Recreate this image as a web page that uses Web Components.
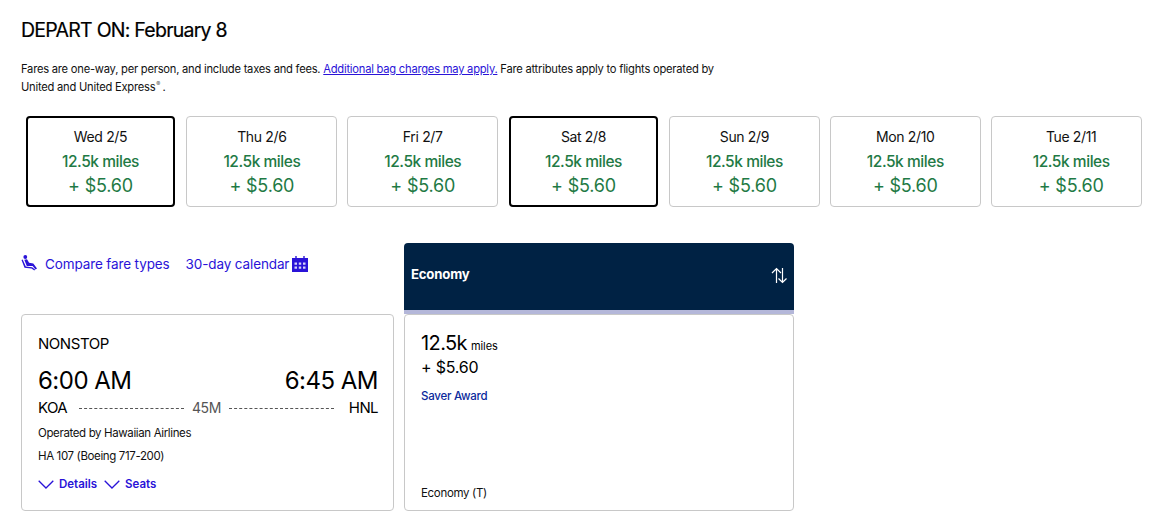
<!DOCTYPE html>
<html lang="en"><head><meta charset="utf-8"><title>Depart on</title>
<style>
html,body{margin:0;padding:0;background:#fff}
body{font-family:Inter,"Liberation Sans",sans-serif;color:#000}
</style></head><body>
<results-page></results-page>
<template id="tp-page"><style>
:host{display:block;width:1174px;height:511px;box-sizing:border-box;padding:18px 0 0 21px;overflow:hidden;letter-spacing:-.3px}
h1{margin:0;font-size:19.5px;line-height:24px;font-weight:400;letter-spacing:-.75px;color:#000;-webkit-text-stroke:.2px #000}
p{margin:18px 0 0;width:720px;font-size:11.2px;line-height:18px;letter-spacing:-.24px;color:#111}
a{color:#2a13d8;text-decoration:underline}
sup{font-size:6px;line-height:0;color:#555;margin:0 2px 0 1px;letter-spacing:0}
.days{display:grid;grid-template-columns:repeat(7,1fr);gap:10px;width:1116px;margin:20px 0 0 4.6px}
.main{display:grid;grid-template-columns:373px 390px;column-gap:10px;margin-top:36px}
.left{display:flex;flex-direction:column;justify-content:space-between}
.links{display:flex;align-items:center;gap:16px;height:42px}
.lnk{display:flex;align-items:center;color:#2a13d8;font-size:13.5px;letter-spacing:-.12px}
.lnk svg{display:block}
</style>
<h1>DEPART ON: February 8</h1>
<p>Fares are one-way, per person, and include taxes and fees. <a href="#">Additional bag charges may apply.</a> Fare attributes apply to flights operated by<br>United and United Express<sup>®</sup>.</p>
<div class="days">
<day-card selected label="Wed 2/5"></day-card><day-card label="Thu 2/6"></day-card><day-card label="Fri 2/7"></day-card><day-card selected style="margin-left:.8px" label="Sat 2/8"></day-card><day-card label="Sun 2/9"></day-card><day-card label="Mon 2/10"></day-card><day-card offset label="Tue 2/11"></day-card>
</div>
<div class="main">
<div class="left">
<div class="links">
<span class="lnk"><svg width="18" height="16" viewBox="0 0 18 16" style="margin-right:6px;margin-top:-2px"><g fill="#2a13d8"><circle cx="4.300" cy="2" r="1.900"/><path d="M3.300 4.800 6 4.300 8.100 7.700l4.200.7 3.700 5-1.500 1-2.900-3.300-5.800-.1z"/><path d="M.5 4.900 1.700 4.500 4.800 11.600l6.300.6 3 2.300-.8 1-2.800-2-7-.7z"/></g></svg>Compare fare types</span>
<span class="lnk">30-day calendar<svg width="16" height="16" viewBox="0 0 16 16" style="margin-left:3px;margin-top:-1px"><path fill="#2a13d8" d="M0 2h3.300V0h1.400v2h6.600V0h1.400v2H16v14H0z"/><path fill="#d5d2f8" d="M2.500 6.500H5v2.200H2.500zM6.800 6.500h2.400v2.200H6.800zM11 6.500h2.500v2.200H11zM2.500 10.500H5v2.200H2.500zM6.800 10.500h2.400v2.200H6.800zM11 10.500h2.500v2.200H11z"/></svg></span>
</div>
<flight-card></flight-card>
</div>
<fare-column></fare-column>
</div>
</template>
<template id="tp-day"><style>
:host{display:block;box-sizing:border-box;height:91px;border:1px solid #c8c8c8;border-radius:4px;text-align:center;background:#fff;padding-top:11px}
:host([selected]){border:2px solid #000;padding-top:10px;margin-right:1px}
:host([offset]){padding-left:10px}
.d{font-size:14px;line-height:17px;letter-spacing:-.35px;color:#111}
.m{font-size:15.500px;line-height:21px;margin-top:6px;color:#1f7a45;letter-spacing:-.45px;font-weight:500}
.c{font-size:18px;line-height:24px;margin-top:2px;color:#1f7a45;letter-spacing:-.2px}
</style><div class="d"></div><div class="m">12.5k miles</div><div class="c">+ $5.60</div></template>
<template id="tp-flight"><style>
:host{display:block;box-sizing:border-box;height:197px;border:1px solid #c8c8c8;border-radius:4px;padding:19px 15px 0 16px;background:#fff}
.n{font-size:15px;line-height:20px;letter-spacing:-.45px}
.t{display:flex;justify-content:space-between;font-size:24px;line-height:30px;margin-top:12px;letter-spacing:-.52px}
.r{display:flex;align-items:center;font-size:15px;line-height:20px;letter-spacing:-.6px;margin-top:2px}
.r i{flex:1;border-top:1px dashed #555;height:0}
.r i:nth-of-type(1){margin:0 8px 0 12px}
.r i:nth-of-type(2){margin:0 15px 0 8px}
.r b{font-weight:400;color:#555;font-size:14px;letter-spacing:-.4px}
.o{font-size:11.500px;line-height:16px;letter-spacing:-.37px;color:#111}
.o.a{margin-top:7px}.o.b{margin-top:7px}
.l{display:flex;align-items:center;margin-top:12px;font-size:11.500px;line-height:16px;font-weight:600;color:#2a13d8;letter-spacing:-.02px}
.l svg{margin-right:5px}.l span{margin-right:7px}
</style>
<div class="n">NONSTOP</div>
<div class="t"><span>6:00 AM</span><span>6:45 AM</span></div>
<div class="r"><span>KOA</span><i></i><b>45M</b><i></i><span>HNL</span></div>
<div class="o a">Operated by Hawaiian Airlines</div>
<div class="o b">HA 107 (Boeing 717-200)</div>
<div class="l"><svg width="16" height="9" viewBox="0 0 16 9"><path d="M.7.7 8 8 15.300.7" fill="none" stroke="#2a13d8" stroke-width="1.300"/></svg><span>Details</span><svg width="16" height="9" viewBox="0 0 16 9"><path d="M.7.7 8 8 15.300.7" fill="none" stroke="#2a13d8" stroke-width="1.300"/></svg><span>Seats</span></div>
</template>
<template id="tp-fare"><style>
:host{display:flex;flex-direction:column}
.h{display:flex;box-sizing:border-box;height:71px;align-items:center;justify-content:space-between;background:#002244;border-bottom:4px solid #b4b7d9;border-radius:4px 4px 0 0;padding:0 6px 6px 7px;color:#fff;font-size:13.200px;font-weight:700;letter-spacing:-.2px}
.h svg{margin-top:3px}
.b{box-sizing:border-box;height:197px;border:1px solid #c8c8c8;border-radius:4px;padding:16px 16px 0;display:flex;flex-direction:column;background:#fff}
.m{font-size:20px;line-height:24px;letter-spacing:-.6px}
.m small{font-size:11px;letter-spacing:-.1px;margin-left:-1px}
.c{font-size:16px;line-height:18px;letter-spacing:-.2px}
.s{font-size:11.500px;line-height:16px;color:#0c2a9c;font-weight:500;margin-top:12px;letter-spacing:-.25px}
.e{margin-top:auto;margin-bottom:9px;font-size:11.500px;line-height:16px;letter-spacing:-.32px;color:#111}
</style>
<div class="h"><span>Economy</span><svg width="17" height="17" viewBox="0 0 17 17" fill="none" stroke="#fff" stroke-width="1.200"><path d="M5.500 16V1.500M1 6l4.500-4.500L10 6"/><path d="M11.500 1v14.500M7.500 11.500l4 4 4-4"/></svg></div>
<div class="b"><div class="m">12.5k <small>miles</small></div><div class="c">+ $5.60</div><div class="s">Saver Award</div><div class="e">Economy (T)</div></div>
</template>
<script>
function def(name,tpl){customElements.define(name,class extends HTMLElement{constructor(){super();this.attachShadow({mode:'open'}).appendChild(document.getElementById(tpl).content.cloneNode(true))}connectedCallback(){if(name==='day-card')this.shadowRoot.querySelector('.d').textContent=this.getAttribute('label')}})}
def('day-card','tp-day');def('flight-card','tp-flight');def('fare-column','tp-fare');def('results-page','tp-page');
</script>
</body></html>
